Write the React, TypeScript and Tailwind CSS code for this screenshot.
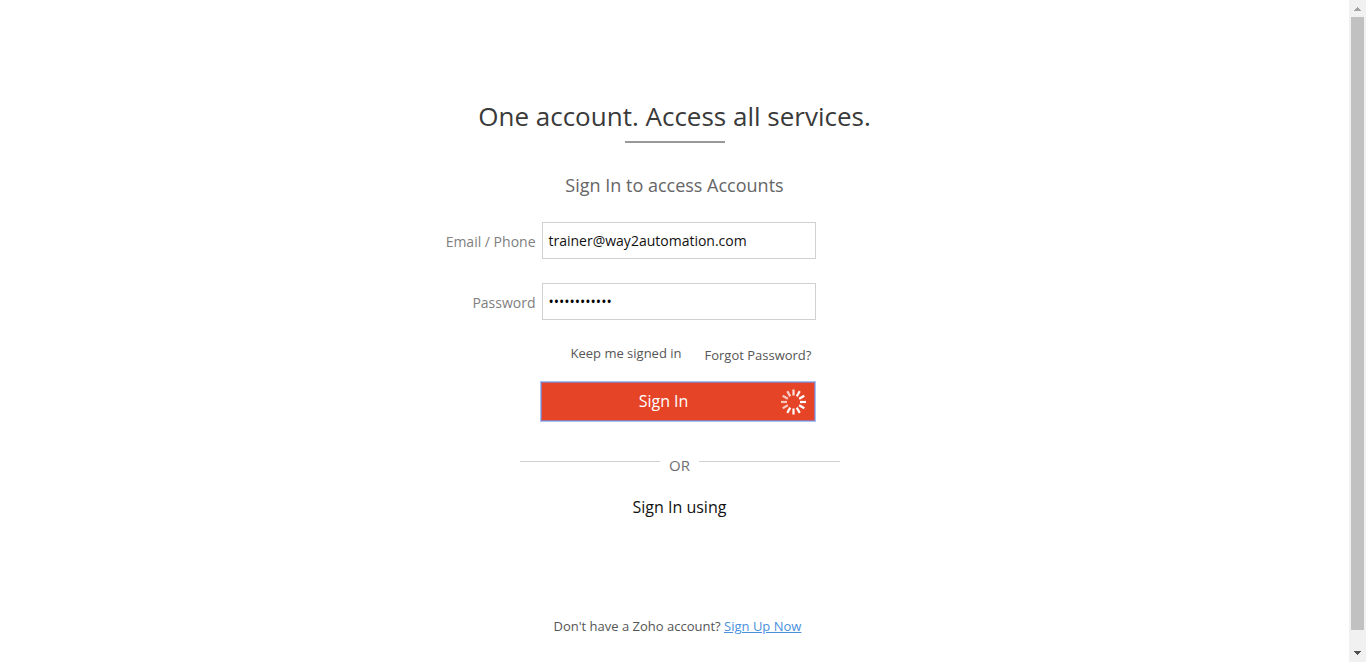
const rays = [0.85, 0.95, 1, 1, 1, 1, 1, 1, 0.7, 0.7, 0.7, 0.75];

export default function App() {
  return (
    <div className="flex h-[662px] w-[1366px] overflow-hidden bg-white font-['Open_Sans',sans-serif] text-[#555]">
      <main className="flex w-[1349px] shrink-0 flex-col">
        <h1 className="mt-[98px] h-[37px] text-center text-[26px] leading-[37px] text-[#3a3a3a]">One account. Access all services.</h1>
        <div className="mt-[6px] ml-[625px] h-[2px] w-[100px] bg-[#999]" />
        <h2 className="mt-[30px] h-[25px] text-center text-[18px] leading-[25px] text-[#666]">Sign In to access Accounts</h2>
        <form className="mt-[24px] flex flex-col">
          <div className="flex h-[37px] items-center">
            <label className="w-[535.5px] pt-[2px] text-right text-sm text-[#808080]">Email / Phone</label>
            <div className="ml-[6.5px] flex h-[37px] w-[274px] items-center border border-[#d0d0d0] pl-[5.5px] text-sm text-[#111]">trainer@way2automation.com</div>
          </div>
          <div className="mt-[24px] flex h-[37px] items-center">
            <label className="w-[535.5px] pt-[2px] text-right text-sm text-[#808080]">Password</label>
            <div className="ml-[6.5px] flex h-[37px] w-[274px] items-center border border-[#d0d0d0] pl-[5.5px] text-sm text-black">••••••••••••</div>
          </div>
          <div className="mt-[23px] flex h-[26px] text-[13px] leading-[20px]">
            <span className="ml-[570.5px] w-[134px]">Keep me signed in</span>
            <span className="pt-[2px]">Forgot Password?</span>
          </div>
          <button type="button" className="mt-[13px] ml-[541px] flex h-[39px] w-[274px] items-center bg-[#e54427] text-base text-white shadow-[0_0_0_1px_#a3c1f4,inset_0_0_0_1px_#9c74a5]">
            <span className="w-[245px] pb-[2px] text-center">Sign In</span>
            <svg className="-ml-[6px] h-[26px] w-[26px] shrink-0" viewBox="-13.5 -13 26 26">
              {rays.map((opacity, i) => (
                <line key={i} x1="0" y1="-6.5" x2="0" y2="-12.5" stroke="white" strokeWidth="2.2" opacity={opacity} transform={`rotate(${i * 30})`} />
              ))}
            </svg>
          </button>
        </form>
        <div className="mt-[34px] ml-[520px] flex h-[20px] w-[320px]">
          <div className="mt-[6px] h-px w-[140px] bg-[#d0d0d0]" />
          <span className="w-[39px] text-center text-[15px] leading-[20px] text-[#707070]">OR</span>
          <div className="mt-[6px] h-px w-[141px] bg-[#d0d0d0]" />
        </div>
        <p className="mt-[20px] ml-[632.5px] text-base text-[#111]">Sign In using</p>
        <p className="mt-[97px] ml-[553.5px] text-[13px] leading-[20px]">Don't have a Zoho account? <a className="text-[#4a90dd] underline">Sign Up Now</a></p>
      </main>
      <div className="flex w-[17px] flex-col bg-[#f1f1f1]">
        <svg className="h-[17px] w-[17px]" viewBox="0 0 17 17" shapeRendering="crispEdges"><path d="M5 11V10H6V9H7V8H8V7H9V8H10V9H11V10H12V11Z" fill="#a3a3a3" /></svg>
        <div className="mx-[2px] h-[613px] bg-[#c1c1c1]" />
        <svg className="mt-[15px] h-[17px] w-[17px]" viewBox="0 0 17 17" shapeRendering="crispEdges"><path d="M5 6V7H6V8H7V9H8V10H9V9H10V8H11V7H12V6Z" fill="#505050" /></svg>
      </div>
    </div>
  );
}
